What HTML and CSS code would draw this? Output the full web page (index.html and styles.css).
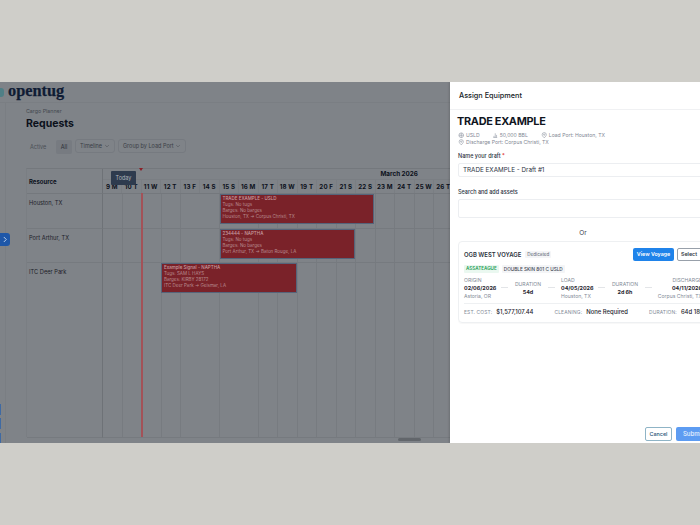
FILE: index.html
```html
<!DOCTYPE html>
<html lang="en">
<head>
<meta charset="utf-8">
<title>Cargo Planner</title>
<link rel="stylesheet" href="styles.css">
</head>
<body>
<div class="frame">
  <div class="app">
    <header class="topbar"><span class="mark"></span><span class="logo">opentug</span></header>
    <main class="content">
      <div class="crumb">Cargo Planner</div>
      <h1 class="title">Requests</h1>
      <div class="filters">
        <span class="tab">Active</span>
        <span class="tab-on">All</span>
        <span class="select sel-a">Timeline <svg class="chev" viewBox="0 0 10 10"><path d="M2 3.5l3 3 3-3"/></svg></span>
        <span class="select sel-b">Group by Load Port <svg class="chev" viewBox="0 0 10 10"><path d="M2 3.5l3 3 3-3"/></svg></span>
      </div>
      <div class="planner">
        <div class="res-head">Resource</div>
        <div class="timeline-head">
          <div class="months"><span class="month">March 2026</span></div>
          <div class="days">
            <span>9 M</span><span>10 T</span><span>11 W</span><span>12 T</span><span>13 F</span><span>14 S</span><span>15 S</span><span>16 M</span><span>17 T</span><span>18 W</span><span>19 T</span><span>20 F</span><span>21 S</span><span>22 S</span><span>23 M</span><span>24 T</span><span>25 W</span><span>26 T</span>
          </div>
        </div>
        <div class="res r1">Houston, TX</div>
        <div class="lane r1"><div class="bar b1"><b>TRADE EXAMPLE - USLD</b><span>Tugs: No tugs</span><span>Barges: No barges</span><span>Houston, TX → Corpus Christi, TX</span></div></div>
        <div class="res r2">Port Arthur, TX</div>
        <div class="lane r2"><div class="bar b2"><b>234444 - NAPTHA</b><span>Tugs: No tugs</span><span>Barges: No barges</span><span>Port Arthur, TX → Baton Rouge, LA</span></div></div>
        <div class="res r3">ITC Deer Park</div>
        <div class="lane r3"><div class="bar b3"><b>Example Signal - NAPTHA</b><span>Tugs: SAM L HAYS</span><span>Barges: KIRBY 28172</span><span>ITC Deer Park → Geismar, LA</span></div></div>
      </div>
    </main>
  </div>

  <div class="side-rule"></div>
  <div class="today-tip">Today</div>
  <div class="today-mark"></div>
  <div class="today-line"></div>
  <div class="scroll-thumb"></div>
  <div class="toggle"><svg viewBox="0 0 10 13"><path d="M3.8 4l2.5 2.5-2.5 2.5"/></svg></div>
  <div class="side-dot d1"></div>
  <div class="side-dot d2"></div>
  <div class="side-dot d3"></div>

  <aside class="drawer">
    <div class="drawer-head">Assign Equipment</div>
    <div class="drawer-body">
      <h2 class="trade">TRADE EXAMPLE</h2>
      <div class="meta">
        <span class="mi gap-a"><svg viewBox="0 0 10 10"><circle cx="5" cy="5" r="3.6"/><path d="M1.5 5h7M5 1.4v7.2"/></svg>USLD</span>
        <span class="mi gap-b"><svg viewBox="0 0 10 10"><path d="M2 8.5h6M3 8V6M5 8V2M7 8V4.5"/></svg>50,000 BBL</span>
        <span class="mi"><svg viewBox="0 0 10 10"><path d="M5 9C3 7 1.8 5.6 1.8 4.1a3.2 3.2 0 0 1 6.4 0C8.2 5.6 7 7 5 9z"/><circle cx="5" cy="4.1" r="1"/></svg>Load Port: Houston, TX</span>
      </div>
      <div class="meta">
        <span class="mi"><svg viewBox="0 0 10 10"><path d="M5 9C3 7 1.8 5.6 1.8 4.1a3.2 3.2 0 0 1 6.4 0C8.2 5.6 7 7 5 9z"/><circle cx="5" cy="4.1" r="1"/></svg>Discharge Port: Corpus Christi, TX</span>
      </div>
      <div class="label l1">Name your draft <em>*</em></div>
      <div class="input i1">TRADE EXAMPLE - Draft #1</div>
      <div class="label l2">Search and add assets</div>
      <div class="input i2"></div>
      <div class="or">Or</div>
      <section class="card">
        <div class="card-top">
          <span class="voyage">OGB WEST VOYAGE</span>
          <span class="chip">Dedicated</span>
          <span class="btn-view">View Voyage</span>
          <span class="btn-select">Select</span>
        </div>
        <div class="tags">
          <span class="tag-green">ASSATEAGUE</span>
          <span class="tag-grey">DOUBLE SKIN 801 C USLD</span>
        </div>
        <div class="route">
          <div class="stop s-a"><small>ORIGIN</small><b>02/06/2026</b><small>Astoria, OR</small></div>
          <i class="dash"></i>
          <div class="stop mid"><small>DURATION</small><b>54d</b></div>
          <i class="dash"></i>
          <div class="stop s-a s-load"><small>LOAD</small><b>04/05/2026</b><small>Houston, TX</small></div>
          <i class="dash"></i>
          <div class="stop mid"><small>DURATION</small><b>2d 6h</b></div>
          <i class="dash"></i>
          <div class="stop s-r"><small>DISCHARGE</small><b>04/11/2026</b><small>Corpus Christi, TX</small></div>
        </div>
        <div class="totals">
          <small>EST. COST:</small><b class="t-a">$1,577,107.44</b>
          <small>CLEANING:</small><b class="t-b">None Required</b>
          <small>DURATION:</small><b>64d 18h</b>
        </div>
      </section>
      <div class="actions"><span class="btn-cancel">Cancel</span><span class="btn-submit">Submit</span></div>
    </div>
  </aside>
</div>
</body>
</html>
```
FILE: styles.css
```css
* { box-sizing: border-box; }
html, body { margin: 0; padding: 0; }
body { width: 700px; height: 525px; background: #cfcec9; font-family: Inter, "Liberation Sans", sans-serif; overflow: hidden; }
.frame { position: relative; margin-top: 82px; width: 700px; height: 361px; overflow: hidden; background: #7f8388; }
.app { width: 450px; height: 361px; overflow: hidden; }
.topbar { height: 21px; display: flex; align-items: center; border-bottom: 1px solid #7a7e83; }
.mark { width: 4px; height: 9px; background: #4f7f86; border-radius: 0 3px 3px 0; }
.logo { margin-left: 4px; margin-top: -3px; font: 700 16.3px/18px "Liberation Serif", serif; color: #0f1c34; -webkit-text-stroke: .25px #0f1c34; }
.content { padding: 4px 0 0 26px; }
.crumb { font-size: 5.3px; line-height: 8px; color: #43484f; }
.title { margin: 1px 0 0; font-size: 10.5px; line-height: 16px; font-weight: 700; color: #0c111b; }
.filters { display: flex; align-items: flex-start; height: 14px; margin-top: 8px; font-size: 5.5px; color: #43484f; }
.tab { flex: none; width: 30px; padding-left: 4px; line-height: 14px; color: #4b5056; }
.tab-on { flex: none; height: 14px; line-height: 14px; width: 16px; text-align: center; background: #777b81; border-radius: 2px; color: #2a2e35; }
.select { flex: none; display: flex; align-items: center; justify-content: space-between; height: 14px; padding: 0 4px; border: 1px solid #767a80; border-radius: 3px; margin-top: -1px; color: #3a3e45; white-space: nowrap; }
.sel-a { width: 40px; margin-left: 3px; }
.sel-b { width: 68px; margin-left: 3px; }
.chev { width: 6px; height: 6px; flex: none; }
.chev path { fill: none; stroke: #4d5157; stroke-width: 1; }
.planner { display: grid; grid-template-columns: 75.5px 1fr; grid-template-rows: 25px 34.5px 34.5px 175px; width: 424px; height: 269px; margin-top: 14px; border-top: 1px solid #74787d; border-left: 1px solid #7a7e83; }
.res-head { grid-column: 1; grid-row: 1; display: flex; align-items: center; padding-left: 2px; font-size: 6px; font-weight: 700; color: #0c111b; border-right: 1px solid #6e7277; border-bottom: 1px solid #74787d; }
.timeline-head { grid-column: 2; grid-row: 1; border-bottom: 1px solid #74787d; overflow: hidden; }
.months { height: 11px; border-bottom: 1px solid #7a7e83; }
.month { display: block; padding-left: 278px; font-size: 6.3px; line-height: 11px; font-weight: 700; color: #0c111b; }
.days { display: grid; grid-template-columns: repeat(18, 19.5px); height: 13px; }
.days span { font-size: 6.2px; line-height: 13px; font-weight: 700; letter-spacing: .15px; text-align: center; color: #0c111b; white-space: nowrap; border-right: 1px solid #7a7e83; }
.res { grid-column: 1; padding: 4px 0 0 2px; font-size: 5.7px; line-height: 9px; color: #1d2128; border-right: 1px solid #6e7277; border-bottom: 1px solid #767a7f; }
.res.r1 { grid-row: 2; }
.res.r2 { grid-row: 3; }
.res.r3 { grid-row: 4; }
.lane { grid-column: 2; display: grid; grid-template-columns: repeat(18, 19.5px); border-bottom: 1px solid #767a7f; background-image: repeating-linear-gradient(90deg, transparent 0, transparent 18.5px, #777b80 18.5px, #777b80 19.5px); }
.lane.r1 { grid-row: 2; }
.lane.r2 { grid-row: 3; }
.lane.r3 { grid-row: 4; align-items: start; }
.bar { display: flex; flex-direction: column; height: 30px; padding: 1px 2px; background: #7a2229; border: 1px solid #56647a; font-size: 4.5px; line-height: 6.1px; color: #b78c90; overflow: hidden; white-space: nowrap; }
.bar b { font-weight: 500; color: #c79ea1; }
.b1 { grid-column: 7 / span 8; width: 154.5px; }
.b2 { grid-column: 7 / span 7; width: 135.5px; }
.b3 { grid-column: 4 / span 7; width: 135.5px; }
.side-rule { position: absolute; left: 5px; top: 21px; width: 1px; height: 340px; background: #7a7e83; }
.today-tip { position: absolute; left: 111px; top: 89px; width: 25px; height: 14px; background: #2e3b4e; border-radius: 1px; color: #aeb4bc; font-size: 5.5px; line-height: 14px; text-align: center; }
.today-mark { position: absolute; left: 139px; top: 86px; border: 2.5px solid transparent; border-top: 3.5px solid #8c1f27; border-bottom: 0; }
.today-line { position: absolute; left: 141px; top: 111px; width: 2px; height: 244px; background: #a35258; }
.scroll-thumb { position: absolute; left: 398px; top: 356px; width: 23px; height: 3px; background: #62666b; border-radius: 2px; }
.toggle { position: absolute; left: 0; top: 151px; width: 10px; height: 13px; background: #1e57a8; border-radius: 0 3px 3px 0; }
.toggle svg { display: block; width: 10px; height: 13px; }
.toggle path { fill: none; stroke: #b9cdea; stroke-width: 1; }
.side-dot { position: absolute; left: 0; width: 1px; height: 11px; background: #3f6aa3; }
.d1 { top: 322px; }
.d2 { top: 336px; }
.d3 { top: 351px; }
.drawer { position: absolute; left: 450px; top: 0; width: 266px; height: 361px; background: #fff; box-shadow: -1px 0 2px rgba(0,0,0,.15); color: #1c2430; }
.drawer-head { height: 28px; padding: 8px 0 0 9px; font-size: 7.3px; line-height: 11px; font-weight: 500; color: #151b25; border-bottom: 1px solid #f0f1f3; }
.drawer-body { position: relative; padding: 4px 8px 0; }
.trade { margin: 0 0 0 -1px; font-size: 10.9px; line-height: 15px; font-weight: 700; letter-spacing: -.3px; color: #10151e; }
.meta { display: flex; align-items: center; height: 7.5px; font-size: 5.1px; color: #7f8794; }
.trade + .meta { margin-top: 2px; }
.mi { display: inline-flex; align-items: center; gap: 1.5px; white-space: nowrap; }
.mi svg { width: 6.5px; height: 6.5px; }
.mi svg * { fill: none; stroke: #7f8794; stroke-width: .8; }
.gap-a { margin-right: 12px; }
.gap-b { margin-right: 13px; }
.label { font-size: 5.5px; line-height: 8px; font-weight: 500; color: #2b333f; }
.label em { color: #d33; font-style: normal; }
.l1 { margin-top: 6px; }
.l2 { margin-top: 11px; }
.input { border: 1px solid #eceef1; border-radius: 2px; }
.i1 { height: 14px; margin-top: 3px; padding-left: 4px; font-size: 6.3px; line-height: 12px; color: #2b333f; }
.i2 { height: 19px; margin-top: 3px; }
.or { margin-top: 11px; text-align: center; font-size: 6.5px; line-height: 9px; color: #3a414c; }
.card { height: 82px; margin-top: 3px; padding: 6px 5px 0; border: 1px solid #eef0f2; border-radius: 4px; box-shadow: 0 1px 1px rgba(0,0,0,.03); }
.card-top { display: flex; align-items: center; height: 13px; }
.voyage { font-size: 5.9px; font-weight: 600; color: #2a313c; }
.chip { margin-left: 4px; padding: 0 2px; font-size: 4.6px; line-height: 7px; color: #5d6672; background: #f4f5f7; border-radius: 1px; }
.btn-view { margin-left: auto; width: 41px; height: 13px; flex: none; background: #1f83ea; border-radius: 2px; font-size: 5.3px; line-height: 13px; font-weight: 600; color: #fff; text-align: center; }
.btn-select { margin-left: 3px; margin-right: -1px; width: 26px; height: 13px; flex: none; border: 1px solid #98a0aa; border-radius: 2px; font-size: 5.3px; line-height: 11px; font-weight: 600; color: #333b46; padding-left: 3px; }
.tags { display: flex; align-items: center; gap: 3px; height: 9px; margin-top: 3px; }
.tag-green { padding: 0 2px; font-size: 4.6px; line-height: 8px; font-weight: 600; color: #1f9d55; background: #eaf8f0; border-radius: 1px; }
.tag-grey { padding: 0 2px; font-size: 4.7px; line-height: 8px; font-weight: 500; color: #3d4551; background: #f4f5f7; border-radius: 1px; }
.route { display: flex; align-items: center; height: 25px; margin-top: 2px; }
.stop { display: flex; flex-direction: column; line-height: 8px; white-space: nowrap; }
.stop small { font-size: 5.1px; line-height: 8px; color: #838b97; }
.stop b { font-size: 5.4px; line-height: 8px; font-weight: 700; color: #1f2630; }
.s-a { width: 32px; }
.s-load { margin-left: 1px; }
.s-r { align-items: flex-end; width: 50px; }
.mid { align-items: center; width: 26px; margin: 0 2px; }
.dash { width: 7px; height: 1px; margin: 0 5px; flex: none; background: #e3e5e8; }
.totals { display: flex; align-items: center; height: 16px; margin-top: 3px; border-top: 1px solid #eef0f2; white-space: nowrap; }
.totals small { font-size: 4.9px; letter-spacing: .15px; color: #838b97; }
.totals b { margin-left: 4px; font-size: 5.9px; font-weight: 500; color: #1f2630; }
.t-a { margin-right: 21px; }
.t-b { margin-right: 21px; }
.actions { position: absolute; left: 195px; top: 317px; display: flex; gap: 4px; }
.btn-cancel { width: 27px; height: 14px; border: 1px solid #8fb4c6; border-radius: 2px; font-size: 5.4px; line-height: 12px; font-weight: 500; color: #1d4f75; text-align: center; }
.btn-submit { width: 34px; height: 14px; background: #5d9cf2; border-radius: 2px; font-size: 6px; line-height: 14px; font-weight: 500; color: #e8f1fd; text-align: center; }
```
